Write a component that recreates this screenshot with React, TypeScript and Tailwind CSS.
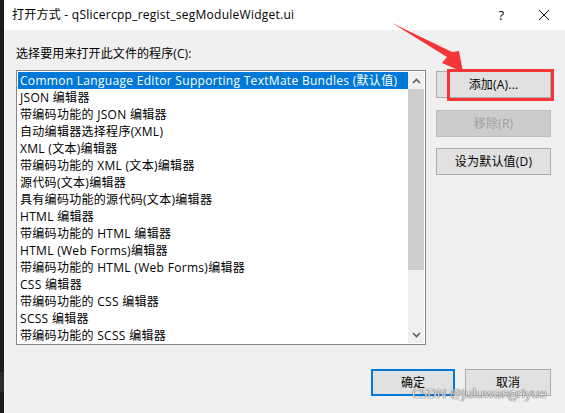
import React from 'react';

const programs = [
  'Common Language Editor Supporting TextMate Bundles (默认值)',
  'JSON 编辑器',
  '带编码功能的 JSON 编辑器',
  '自动编辑器选择程序(XML)',
  'XML (文本)编辑器',
  '带编码功能的 XML (文本)编辑器',
  '源代码(文本)编辑器',
  '具有编码功能的源代码(文本)编辑器',
  'HTML 编辑器',
  '带编码功能的 HTML 编辑器',
  'HTML (Web Forms)编辑器',
  '带编码功能的 HTML (Web Forms)编辑器',
  'CSS 编辑器',
  '带编码功能的 CSS 编辑器',
  'SCSS 编辑器',
  '带编码功能的 SCSS 编辑器',
];

function Chevron({ up }: { up?: boolean }) {
  return (
    <svg width="9" height="6" viewBox="0 0 9 6" className="text-[#606060]">
      <polyline
        points={up ? '1,5 4.5,1.5 8,5' : '1,1 4.5,4.5 8,1'}
        fill="none"
        stroke="currentColor"
        strokeWidth="1.6"
      />
    </svg>
  );
}

export default function App() {
  return (
    <div className="relative flex h-[413px] w-[565px] overflow-hidden font-['Open_Sans','Noto_Sans_CJK_SC',sans-serif] text-[12px] text-black">
      {/* desktop behind the dialog */}
      <div className="flex w-[4px] flex-col bg-[#1b1b1b]">
        <div className="h-[372px]" />
        <div className="h-[20px] bg-[#2a2a2a]" />
      </div>

      <div className="flex flex-1 flex-col">
        {/* title bar */}
        <div className="flex h-[30px] items-center bg-white pl-[8px]">
          <span className="flex-1 leading-none tracking-[0.25px]">打开方式 - qSlicercpp_regist_segModuleWidget.ui</span>
          <span className="mr-[34px] text-[13px] leading-none">?</span>
          <svg width="12" height="12" viewBox="0 0 12 12" className="mr-[15px]">
            <path d="M1 1 L11 11 M11 1 L1 11" stroke="#111" strokeWidth="1" />
          </svg>
        </div>

        {/* body */}
        <div className="flex flex-1 flex-col bg-[#f0f0f0] pl-[12px]">
          <div className="mt-[15px] h-[18px] leading-[18px] tracking-[0.1px]">选择要用来打开此文件的程序(C):</div>

          <div className="mt-[7px] flex">
            <div className="flex h-[275px] w-[410px] border border-[#828790] bg-white p-[1px]">
              <div className="flex-1 overflow-hidden tracking-[0.3px]">
                {programs.map((p, i) => (
                  <div
                    key={p}
                    className={
                      i === 0
                        ? 'h-[17px] whitespace-nowrap bg-[#0078d7] pl-[2px] leading-[17px] text-white'
                        : 'h-[17px] whitespace-nowrap pl-[2px] leading-[17px]'
                    }
                  >
                    {p}
                  </div>
                ))}
              </div>
              <div className="flex w-[16px] flex-col bg-[#f0f0f0]">
                <div className="flex h-[17px] items-center justify-center">
                  <Chevron up />
                </div>
                <div className="h-[181px] bg-[#cdcdcd]" />
                <div className="flex-1" />
                <div className="flex h-[17px] items-center justify-center">
                  <Chevron />
                </div>
              </div>
            </div>

            <div className="ml-[10px] flex w-[115px] flex-col tracking-[0.2px]">
              <div className="relative mt-[1px]">
                <button className="flex h-[27px] w-full items-center justify-center border border-[#adadad] bg-[#e1e1e1]">
                  添加(A)...
                </button>
                <div className="absolute left-[11px] top-[-2px] h-[32px] w-[107px] border-[3px] border-[#f53636]" />
              </div>
              <button className="mt-[12px] flex h-[27px] w-full items-center justify-center border border-[#bfbfbf] bg-[#cccccc] text-[#a0a0a0]">
                移除(R)
              </button>
              <button className="mt-[11px] flex h-[27px] w-full items-center justify-center border border-[#adadad] bg-[#e1e1e1]">
                设为默认值(D)
              </button>
            </div>
          </div>

          <div className="mt-[24px] flex justify-end gap-[10px] pr-[14px]">
            <button className="flex h-[27px] w-[84px] items-center justify-center border-2 border-[#0078d7] bg-[#e1e1e1]">
              确定
            </button>
            <button className="flex h-[27px] w-[86px] items-center justify-center border border-[#adadad] bg-[#e1e1e1]">
              取消
            </button>
          </div>
        </div>
      </div>

      {/* red annotation arrow */}
      <svg className="pointer-events-none absolute left-0 top-0" width="565" height="413">
        <polygon points="392,23 452,52 459,51 463,72 442,63 447,57" fill="#f53636" />
      </svg>

      {/* watermark */}
      <div className="pointer-events-none absolute left-[412px] top-[387px] text-[13px] leading-none text-[#e8e8e8] [text-shadow:0_0_1px_#555,0_0_1px_#555]">
        CSDN @juluwangriyue
      </div>
    </div>
  );
}
